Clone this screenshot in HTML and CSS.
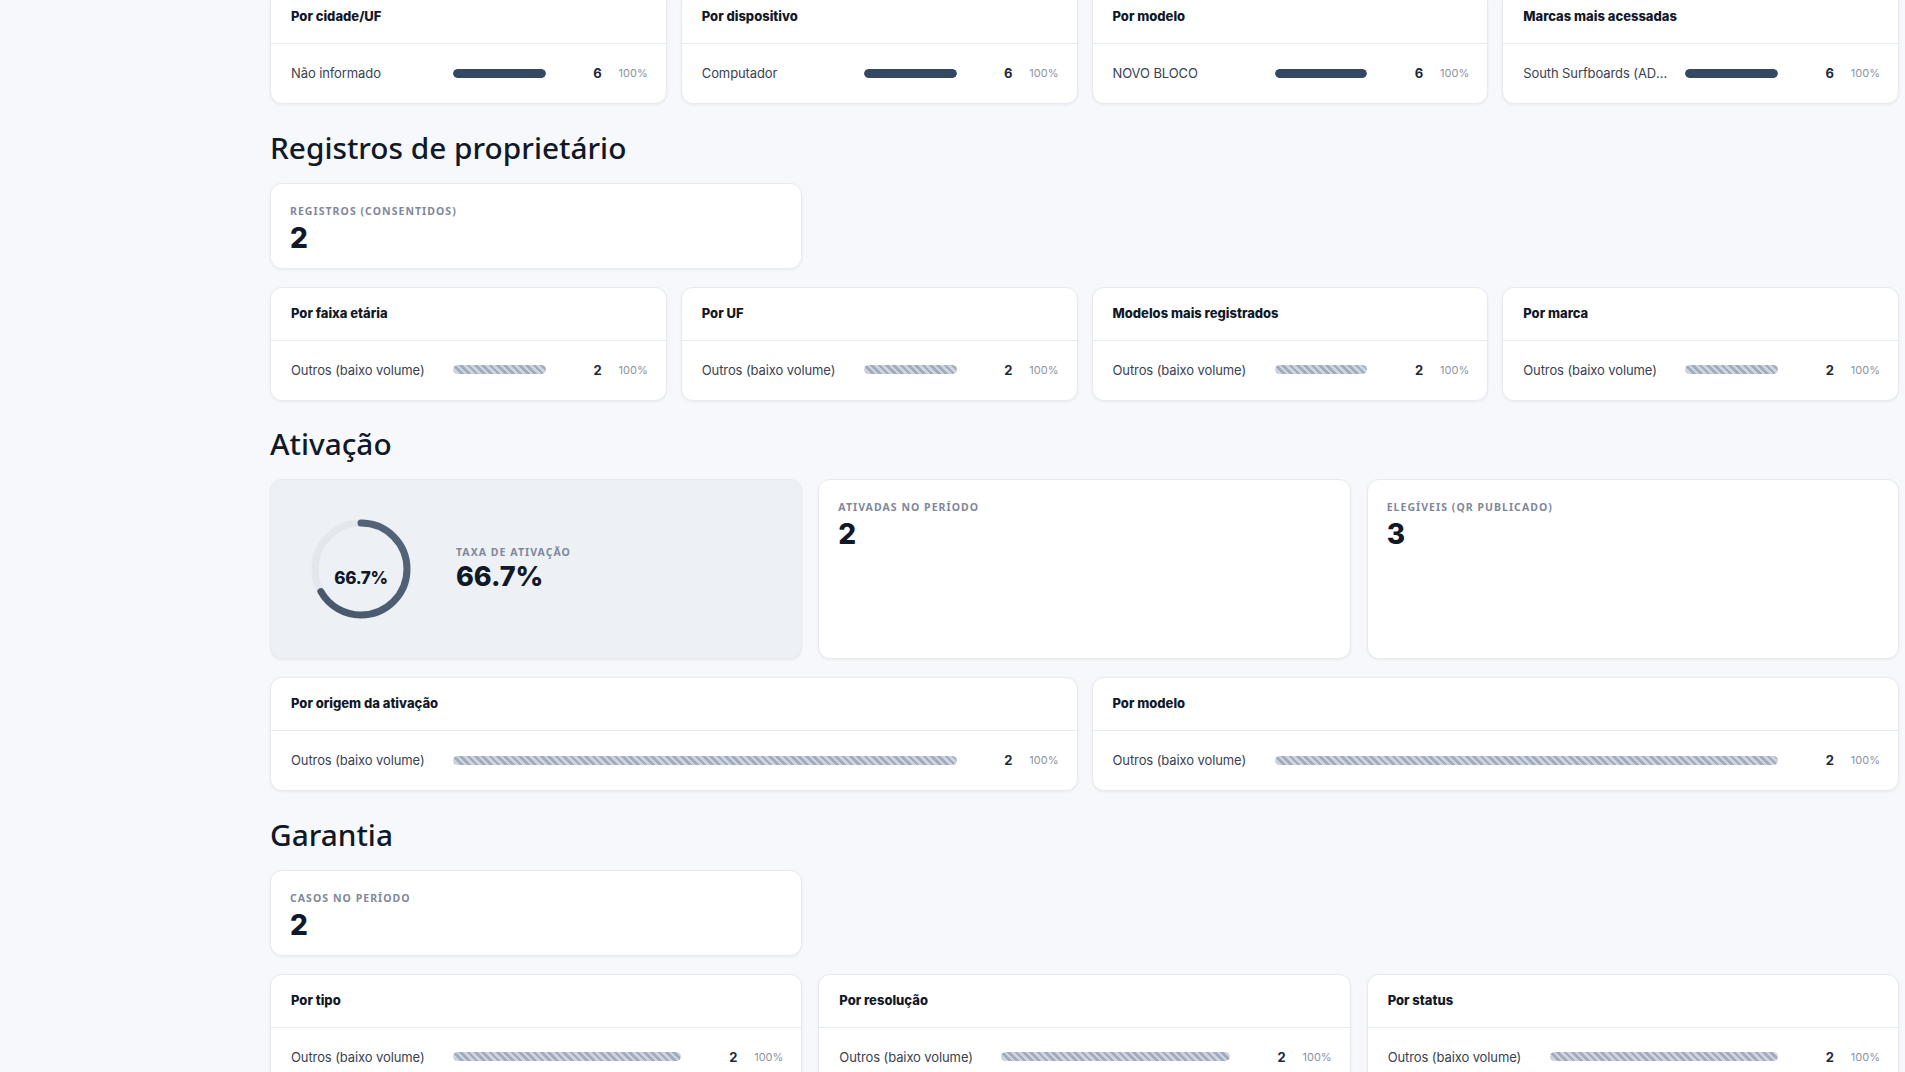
FILE: index.html
```html
<!DOCTYPE html>
<html lang="pt-BR">
<head>
<meta charset="utf-8">
<title>Dashboard</title>
<link rel="stylesheet" href="styles.css">
</head>
<body>
<main class="page">
  <div class="grid grid-4">
    <div class="card">
      <div class="card-head">Por cidade/UF</div>
      <div class="card-body">
        <div class="row"><span class="row-label">Não informado</span><span class="bar"><span class="fill solid" style="width:100%"></span></span><span class="count">6</span><span class="pct">100%</span></div>
      </div>
    </div>
    <div class="card">
      <div class="card-head">Por dispositivo</div>
      <div class="card-body">
        <div class="row"><span class="row-label">Computador</span><span class="bar"><span class="fill solid" style="width:100%"></span></span><span class="count">6</span><span class="pct">100%</span></div>
      </div>
    </div>
    <div class="card">
      <div class="card-head">Por modelo</div>
      <div class="card-body">
        <div class="row"><span class="row-label">NOVO BLOCO</span><span class="bar"><span class="fill solid" style="width:100%"></span></span><span class="count">6</span><span class="pct">100%</span></div>
      </div>
    </div>
    <div class="card">
      <div class="card-head">Marcas mais acessadas</div>
      <div class="card-body">
        <div class="row"><span class="row-label">South Surfboards (ADMIN)</span><span class="bar"><span class="fill solid" style="width:100%"></span></span><span class="count">6</span><span class="pct">100%</span></div>
      </div>
    </div>
  </div>

  <section class="section">
    <h2 class="section-title">Registros de proprietário</h2>
    <div class="grid grid-3">
      <div class="card kpi">
        <div class="kpi-label">Registros (consentidos)</div>
        <div class="kpi-value">2</div>
      </div>
    </div>
    <div class="grid grid-4">
      <div class="card">
        <div class="card-head">Por faixa etária</div>
        <div class="card-body">
          <div class="row"><span class="row-label">Outros (baixo volume)</span><span class="bar"><span class="fill striped" style="width:100%"></span></span><span class="count">2</span><span class="pct">100%</span></div>
        </div>
      </div>
      <div class="card">
        <div class="card-head">Por UF</div>
        <div class="card-body">
          <div class="row"><span class="row-label">Outros (baixo volume)</span><span class="bar"><span class="fill striped" style="width:100%"></span></span><span class="count">2</span><span class="pct">100%</span></div>
        </div>
      </div>
      <div class="card">
        <div class="card-head">Modelos mais registrados</div>
        <div class="card-body">
          <div class="row"><span class="row-label">Outros (baixo volume)</span><span class="bar"><span class="fill striped" style="width:100%"></span></span><span class="count">2</span><span class="pct">100%</span></div>
        </div>
      </div>
      <div class="card">
        <div class="card-head">Por marca</div>
        <div class="card-body">
          <div class="row"><span class="row-label">Outros (baixo volume)</span><span class="bar"><span class="fill striped" style="width:100%"></span></span><span class="count">2</span><span class="pct">100%</span></div>
        </div>
      </div>
    </div>
  </section>

  <section class="section">
    <h2 class="section-title">Ativação</h2>
    <div class="grid grid-3">
      <div class="card gauge-card">
        <div class="gauge">
          <svg class="gauge-svg" width="140" height="140" viewBox="0 0 140 140">
            <defs>
              <linearGradient id="arcGrad" x1="0" y1="0" x2="1" y2="1">
                <stop offset="0" stop-color="#475669"/>
                <stop offset="1" stop-color="#56657a"/>
              </linearGradient>
            </defs>
            <circle cx="70" cy="70" r="46" fill="none" stroke="#e4e8ee" stroke-width="7"/>
            <circle cx="70" cy="70" r="46" fill="none" stroke="url(#arcGrad)" stroke-width="7" stroke-linecap="round" stroke-dasharray="192.8 289.03" transform="rotate(-90 70 70)"/>
          </svg>
          <span class="gauge-text">66.7%</span>
        </div>
        <div class="gauge-info">
          <div class="kpi-label">Taxa de ativação</div>
          <div class="kpi-value gauge-value">66.7%</div>
        </div>
      </div>
      <div class="card kpi">
        <div class="kpi-label">Ativadas no período</div>
        <div class="kpi-value">2</div>
      </div>
      <div class="card kpi">
        <div class="kpi-label">Elegíveis (QR publicado)</div>
        <div class="kpi-value">3</div>
      </div>
    </div>
    <div class="grid grid-2">
      <div class="card">
        <div class="card-head">Por origem da ativação</div>
        <div class="card-body">
          <div class="row"><span class="row-label">Outros (baixo volume)</span><span class="bar"><span class="fill striped" style="width:100%"></span></span><span class="count">2</span><span class="pct">100%</span></div>
        </div>
      </div>
      <div class="card">
        <div class="card-head">Por modelo</div>
        <div class="card-body">
          <div class="row"><span class="row-label">Outros (baixo volume)</span><span class="bar"><span class="fill striped" style="width:100%"></span></span><span class="count">2</span><span class="pct">100%</span></div>
        </div>
      </div>
    </div>
  </section>

  <section class="section">
    <h2 class="section-title">Garantia</h2>
    <div class="grid grid-3">
      <div class="card kpi">
        <div class="kpi-label">Casos no período</div>
        <div class="kpi-value">2</div>
      </div>
    </div>
    <div class="grid grid-3">
      <div class="card">
        <div class="card-head">Por tipo</div>
        <div class="card-body">
          <div class="row"><span class="row-label">Outros (baixo volume)</span><span class="bar"><span class="fill striped" style="width:100%"></span></span><span class="count">2</span><span class="pct">100%</span></div>
        </div>
      </div>
      <div class="card">
        <div class="card-head">Por resolução</div>
        <div class="card-body">
          <div class="row"><span class="row-label">Outros (baixo volume)</span><span class="bar"><span class="fill striped" style="width:100%"></span></span><span class="count">2</span><span class="pct">100%</span></div>
        </div>
      </div>
      <div class="card">
        <div class="card-head">Por status</div>
        <div class="card-body">
          <div class="row"><span class="row-label">Outros (baixo volume)</span><span class="bar"><span class="fill striped" style="width:100%"></span></span><span class="count">2</span><span class="pct">100%</span></div>
        </div>
      </div>
    </div>
  </section>
</main>
</body>
</html>
```

FILE: styles.css
```css
* { box-sizing: border-box; }

html, body {
  margin: 0;
  padding: 0;
  background: #f6f8fb;
  font-family: Inter, "Noto Sans", "Liberation Sans", sans-serif;
  color: #1f2937;
}

.page {
  margin: -10px 0 0 270px;
  width: 1629px;
  padding-bottom: 40px;
  display: flex;
  flex-direction: column;
}

.section {
  margin-top: 26.5px;
  display: flex;
  flex-direction: column;
  gap: 18px;
}

.section-title {
  margin: 0;
  font-family: "Noto Sans", "Open Sans", sans-serif;
  font-weight: 500;
  font-size: 29.8px;
  line-height: 34px;
  color: #111827;
}

.grid {
  display: grid;
  gap: 14px;
}
.grid-4 { grid-template-columns: repeat(4, 1fr); }
.grid-3 { grid-template-columns: repeat(3, 1fr); gap: 16px; }
.grid-2 { grid-template-columns: repeat(2, 1fr); }

.card {
  background: #ffffff;
  border: 1px solid #e7eaef;
  border-radius: 12px;
  box-shadow: 0 1px 3px rgba(17, 24, 39, 0.06);
}

.card-head {
  padding: 17px 20px 19px;
  font-size: 13px;
  line-height: 16px;
  font-weight: 800;
  color: #111827;
  border-bottom: 1px solid #e6e9ee;
}

.card-body {
  padding: 19px 18px 20px 20px;
}

.row {
  display: grid;
  grid-template-columns: 150px 1fr 44px 34px;
  column-gap: 12px;
  align-items: center;
  height: 20px;
}

.row-label {
  font-size: 13px;
  letter-spacing: -0.1px;
  color: #3a4251;
  white-space: nowrap;
  overflow: hidden;
  text-overflow: ellipsis;
}

.bar {
  display: block;
  height: 9px;
  border-radius: 5px;
  background: #eef1f5;
  overflow: hidden;
}

.fill {
  display: block;
  height: 100%;
  border-radius: 5px;
}
.fill.solid { background: #344861; }
.fill.striped {
  background: repeating-linear-gradient(45deg, #a1adbe 0 2.6px, #cdd4de 2.6px 5.2px);
}

.count {
  text-align: right;
  font-size: 13px;
  font-weight: 700;
  color: #1f2937;
}

.pct {
  text-align: right;
  font-size: 11px;
  color: #8b93a1;
}

.kpi {
  padding: 20px 18px 14px 19px;
  display: flex;
  flex-direction: column;
  gap: 4px;
}

.kpi-label {
  font-family: "Noto Sans", Inter, sans-serif;
  font-size: 10.5px;
  line-height: 14px;
  font-weight: 700;
  letter-spacing: 0.1em;
  text-transform: uppercase;
  color: #7f889b;
}

.kpi-value {
  font-size: 28px;
  line-height: 32px;
  font-weight: 800;
  color: #111827;
}

.gauge-card {
  background: #edf0f4;
  padding: 19px 20px;
  display: flex;
  align-items: center;
  gap: 25px;
}

.gauge {
  display: grid;
  width: 140px;
  height: 140px;
}
.gauge-svg, .gauge-text {
  grid-area: 1 / 1;
}
.gauge-text {
  align-self: center;
  justify-self: center;
  padding-top: 18px;
  font-size: 17px;
  font-weight: 800;
  color: #111827;
  letter-spacing: -0.3px;
}

.gauge-info {
  display: flex;
  flex-direction: column;
  gap: 2px;
}

.gauge-value {
  font-size: 27px;
}
```
